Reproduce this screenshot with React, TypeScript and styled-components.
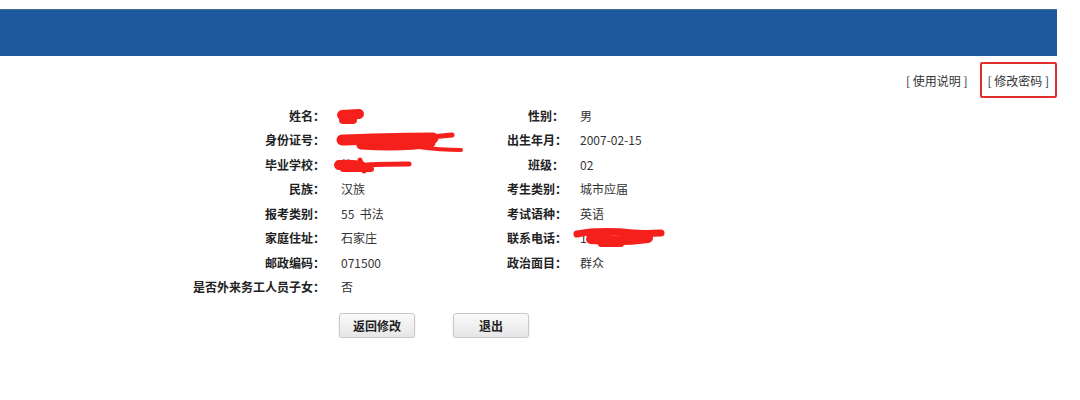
import React from 'react';
import styled, { createGlobalStyle } from 'styled-components';

const GlobalStyle = createGlobalStyle`
  html, body {
    margin: 0;
    padding: 0;
    background: #fff;
  }
  body {
    font-family: "Microsoft YaHei", "Noto Sans CJK SC", "Noto Sans", sans-serif;
    font-size: 12px;
    color: #333;
  }
`;

const Page = styled.div`
  width: 1057px;
  padding-top: 9px;
`;

const Banner = styled.div`
  height: 47px;
  background: #1e5a9d;
  border-top: 1px solid #3f6f8f;
  box-sizing: border-box;
`;

const LinkBar = styled.div`
  display: flex;
  justify-content: flex-end;
  align-items: center;
  gap: 12px;
  height: 36px;
  margin-top: 6px;
`;

const TopLink = styled.a<{ $boxed?: boolean }>`
  display: flex;
  align-items: center;
  justify-content: center;
  height: 100%;
  box-sizing: border-box;
  padding: 0 ${(p) => (p.$boxed ? '6px' : '0')};
  color: #333;
  text-decoration: none;
  border: ${(p) => (p.$boxed ? '2px solid #e0312c' : 'none')};
  border-radius: 2px;
  cursor: pointer;
`;

const InfoGrid = styled.div`
  position: relative;
  display: grid;
  grid-template-columns: 132px 150px 57px 200px;
  column-gap: 16px;
  grid-auto-rows: 24.5px;
  margin: 5px 0 0 193px;
  align-items: center;
`;

const Label = styled.div`
  text-align: right;
  font-weight: bold;
  color: #222;
  white-space: nowrap;
`;

const Value = styled.div`
  color: #333;
  white-space: pre;
`;

const Marks = styled.svg`
  position: absolute;
  left: 0;
  top: 0;
  width: 540px;
  height: 200px;
  overflow: visible;
  pointer-events: none;
`;

const ButtonRow = styled.div`
  display: flex;
  gap: 38px;
  margin: 14px 0 0 339px;
`;

const Button = styled.button`
  width: 76px;
  height: 25px;
  border: 1px solid #c8c8c8;
  border-radius: 3px;
  background: linear-gradient(#fafafa, #e6e6e6);
  box-shadow: 0 1px 2px rgba(0, 0, 0, 0.12);
  font-family: inherit;
  font-size: 12px;
  font-weight: bold;
  color: #222;
  cursor: pointer;
`;

type Row = [string, string, string, string];

const rows: Row[] = [
  ['姓名：', '', '性别：', '男'],
  ['身份证号：', '13              29', '出生年月：', '2007-02-15'],
  ['毕业学校：', '第', '班级：', '02'],
  ['民族：', '汉族', '考生类别：', '城市应届'],
  ['报考类别：', '55  书法', '考试语种：', '英语'],
  ['家庭住址：', '石家庄', '联系电话：', '1'],
  ['邮政编码：', '071500', '政治面目：', '群众'],
  ['是否外来务工人员子女：', '否', '', ''],
];

// red marker strokes over the personal data; grid origin is at page (193, 103)
const RedMarks = () => (
  <Marks viewBox="0 0 540 200">
    <g fill="none" stroke="#f5201b" strokeLinecap="round" strokeLinejoin="round">
      {/* name */}
      <path d="M149 12 L166 11" strokeWidth={10} />
      <path d="M150 17 L160 17" strokeWidth={8} />
      {/* id number */}
      <path d="M149 37 C180 36 210 35 240 35" strokeWidth={11} />
      <path d="M168 42 C200 44 220 43 238 40" strokeWidth={9} />
      <path d="M238 34 L259 32" strokeWidth={5} />
      <path d="M225 44 C240 46 255 47 268 47" strokeWidth={4} />
      {/* school */}
      <path d="M146 62 C155 61 162 62 168 63" strokeWidth={10} />
      <path d="M160 63 C180 61 200 61 216 61" strokeWidth={5} />
      <path d="M167 57 L171 68" strokeWidth={5} />
      <path d="M150 66 L178 66" strokeWidth={6} />
      {/* phone */}
      <path d="M384 131 C400 128 420 128 440 130 C450 131 460 130 468 130" strokeWidth={7} />
      <path d="M398 136 C420 138 440 137 455 135" strokeWidth={10} />
      <path d="M408 141 L428 141" strokeWidth={6} />
    </g>
  </Marks>
);

export default function App() {
  return (
    <Page>
      <GlobalStyle />
      <Banner />
      <LinkBar>
        <TopLink>[ 使用说明 ]</TopLink>
        <TopLink $boxed>[ 修改密码 ]</TopLink>
      </LinkBar>
      <InfoGrid>
        {rows.map(([l1, v1, l2, v2]) => (
          <React.Fragment key={l1}>
            <Label>{l1}</Label>
            <Value>{v1}</Value>
            <Label>{l2}</Label>
            <Value>{v2}</Value>
          </React.Fragment>
        ))}
        <RedMarks />
      </InfoGrid>
      <ButtonRow>
        <Button>返回修改</Button>
        <Button>退出</Button>
      </ButtonRow>
    </Page>
  );
}
